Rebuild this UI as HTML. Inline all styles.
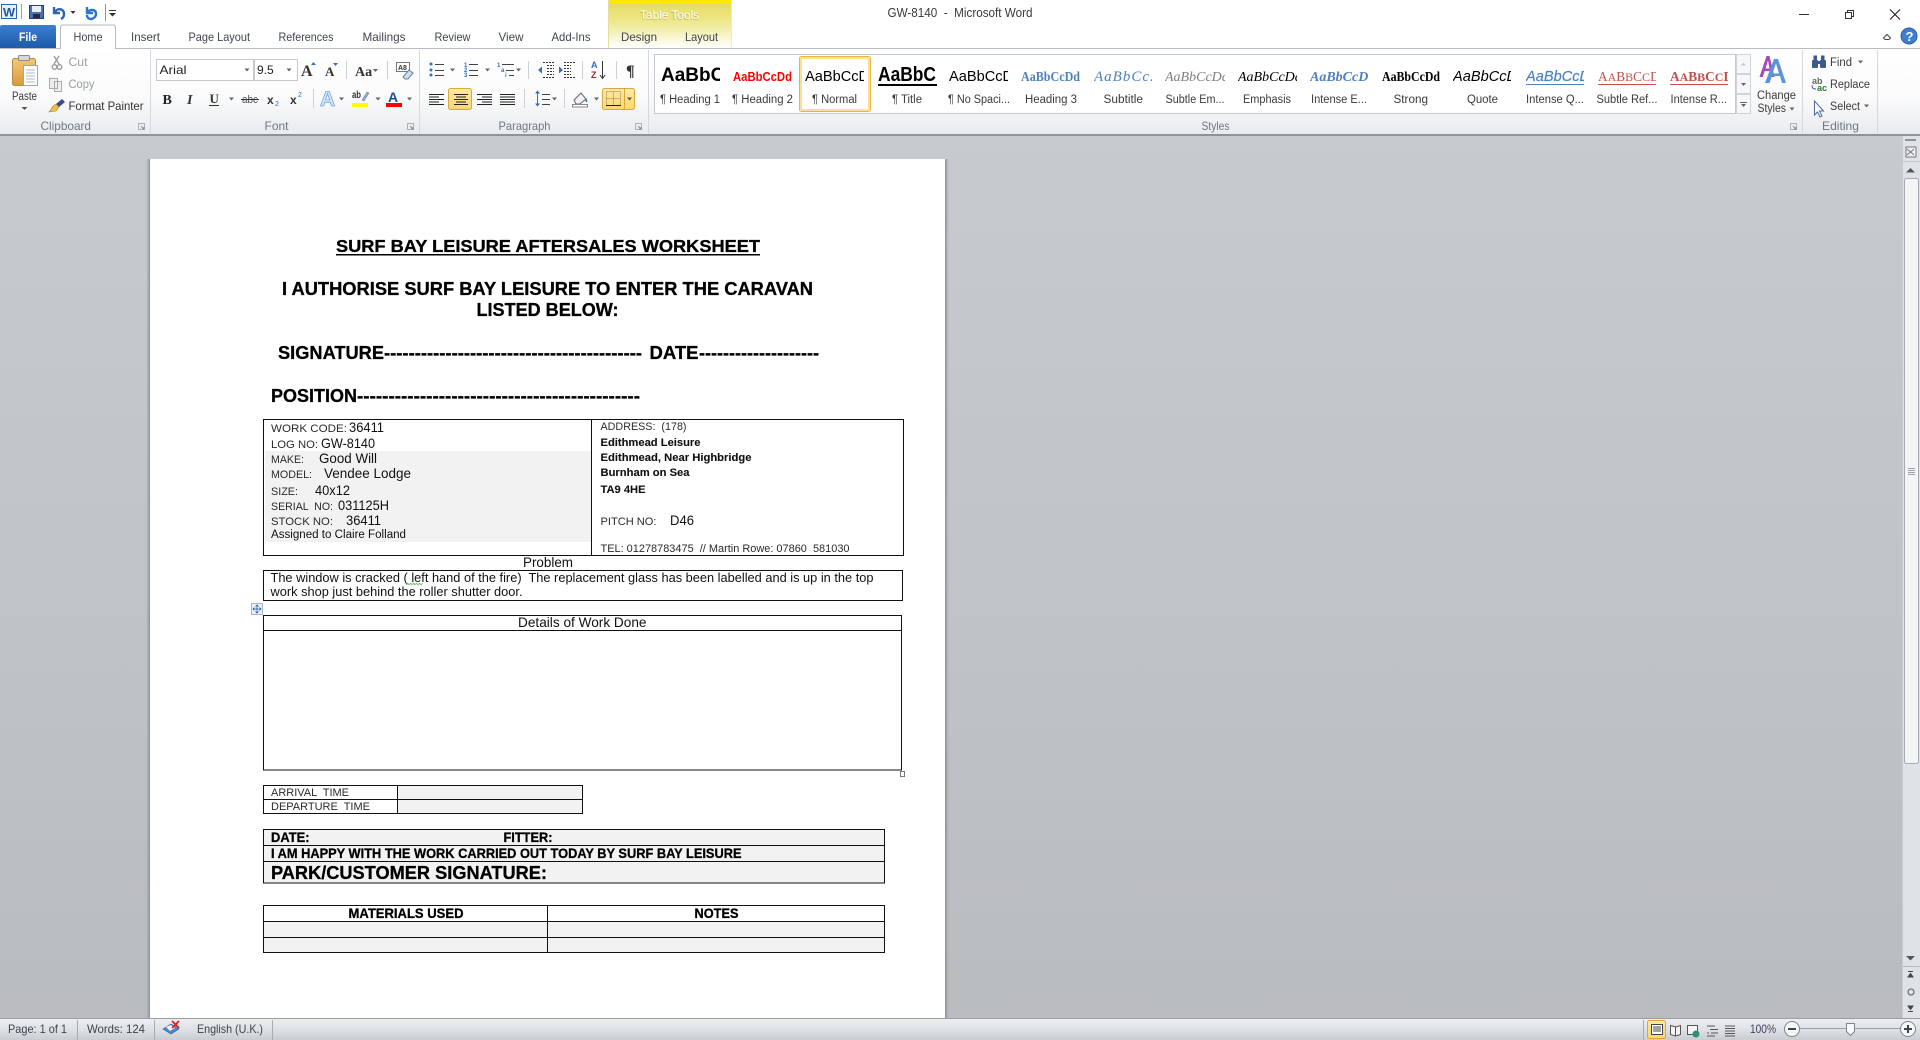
<!DOCTYPE html>
<html lang="en"><head><meta charset="utf-8"><title>GW-8140 - Microsoft Word</title>
<style>
html,body{margin:0;padding:0;background:#c9cdd2;overflow:hidden}
svg{display:block}
text{font-family:"Liberation Sans",Arial,sans-serif;white-space:pre}
.t{font-size:12px;fill:#3f4650}
.g{font-size:12px;fill:#6f7882}
.s{font-size:11.5px;fill:#3b3b3b}
.d{font-size:12px;fill:#9a9ea3}
.l{font-size:11px;fill:#2a2a2a}
.v{font-size:14px;fill:#111}
.b{font-size:11px;font-weight:bold;fill:#111;stroke:#111;stroke-width:.1px}
.h{font-weight:bold;fill:#000;stroke:#000;stroke-width:.3px}
.ln{stroke:#111;stroke-width:1;fill:none}
.ic{stroke:#444;stroke-width:1;fill:none}
.sep{stroke:#d4d7db;stroke-width:1}
</style></head><body>
<svg xmlns="http://www.w3.org/2000/svg" width="1920" height="1040" viewBox="0 0 1920 1040">
<defs>
<linearGradient id="rib" x1="0" y1="0" x2="0" y2="1"><stop offset="0" stop-color="#ffffff"/><stop offset=".55" stop-color="#fbfbfc"/><stop offset="1" stop-color="#e9ebee"/></linearGradient>
<linearGradient id="can" x1="0" y1="0" x2="0" y2="1"><stop offset="0" stop-color="#c9cdd2"/><stop offset="1" stop-color="#b9bcbf"/></linearGradient>
<linearGradient id="st" x1="0" y1="0" x2="0" y2="1"><stop offset="0" stop-color="#eef0f2"/><stop offset=".5" stop-color="#dfe2e6"/><stop offset="1" stop-color="#c9ccd1"/></linearGradient>
<linearGradient id="tt" x1="0" y1="0" x2="0" y2="1"><stop offset="0" stop-color="#e2d95a"/><stop offset=".45" stop-color="#eee88c"/><stop offset="1" stop-color="#ffffff"/></linearGradient>
<linearGradient id="file" x1="0" y1="0" x2="0" y2="1"><stop offset="0" stop-color="#3a7fd0"/><stop offset="1" stop-color="#1e5aa8"/></linearGradient>
<linearGradient id="hl" x1="0" y1="0" x2="0" y2="1"><stop offset="0" stop-color="#ffe9a3"/><stop offset="1" stop-color="#fdd671"/></linearGradient>
<linearGradient id="shl" x1="0" y1="0" x2="1" y2="0"><stop offset="0" stop-color="#9c9fa3" stop-opacity="0"/><stop offset="1" stop-color="#8d9094"/></linearGradient>
<linearGradient id="shr" x1="0" y1="0" x2="1" y2="0"><stop offset="0" stop-color="#8d9094"/><stop offset="1" stop-color="#9c9fa3" stop-opacity="0"/></linearGradient>
<linearGradient id="clip" x1="0" y1="0" x2="0" y2="1"><stop offset="0" stop-color="#f4c778"/><stop offset="1" stop-color="#d99a3e"/></linearGradient>
</defs>

<!-- canvas -->
<rect width="1920" height="1040" fill="url(#can)"/>

<!-- title bar / tabs -->
<rect width="1920" height="48" fill="#fff"/>
<rect x="608" y="0" width="123" height="48" fill="url(#tt)"/>
<rect x="608" y="0" width="123" height="4" fill="#fde900"/>
<line x1="608.5" y1="0" x2="608.5" y2="48" stroke="#e3df9a"/>
<line x1="731.5" y1="0" x2="731.5" y2="48" stroke="#eeecd0"/>
<text x="640" y="20" font-size="12" font-weight="bold" fill="#b5ab4a" opacity=".6" textLength="59" lengthAdjust="spacingAndGlyphs">Table Tools</text>
<text x="640" y="19" font-size="12" fill="#fff" textLength="59" lengthAdjust="spacingAndGlyphs">Table Tools</text>
<text x="887.5" y="17" font-size="12.5" fill="#3a3a3a" textLength="145" lengthAdjust="spacingAndGlyphs">GW-8140  -  Microsoft Word</text>

<!-- QAT -->
<rect x="1.5" y="4.5" width="15" height="14" fill="#e8f0fa" stroke="#2a66b4"/>
<text x="3" y="16.5" font-size="12" font-weight="bold" fill="#1c55a6" textLength="12" lengthAdjust="spacingAndGlyphs">W</text>
<line x1="21.5" y1="4" x2="21.5" y2="19" stroke="#9aa0a8"/>
<rect x="29.5" y="5.5" width="14" height="13" fill="#4f6fae" stroke="#2c3f73"/>
<rect x="32" y="6" width="9" height="6" fill="#e8eefa"/><rect x="33" y="14" width="7" height="4" fill="#222a44"/>
<path d="M54 7v6h6M55 12c2-4 9-4 9 2 0 2-1 4-3 5" fill="none" stroke="#2a66b4" stroke-width="2.4"/>
<path d="M70.5 11h5l-2.5 3z" fill="#333"/>
<path d="M87 7v6h6M88 12c2-3 8-3 8 2 0 3-3 5-5 5-3 0-4-2-4-4" fill="none" stroke="#2f76c8" stroke-width="2.4"/>
<line x1="105.5" y1="4" x2="105.5" y2="21" stroke="#8d939b"/>
<path d="M109 10h7v1h-7zM109 13h7l-3.500 3.500z" fill="#333"/>

<!-- window controls -->
<line x1="1799" y1="14.500" x2="1809" y2="14.500" stroke="#333"/>
<path d="M1845.500 12.500h6v6h-6zM1847.500 12.500v-2h6v6h-2" fill="none" stroke="#333"/>
<path d="M1890 9.500l10 10M1900 9.500l-10 10" stroke="#222" stroke-width="1.100"/>
<path d="M1883.500 38l3.500-3.500 3.500 3.500-1.500 1.500h-4z" fill="none" stroke="#444"/>
<circle cx="1909" cy="36" r="8" fill="#3f7fd0"/><circle cx="1909" cy="36" r="8" fill="none" stroke="#2a5ea8"/>
<text x="1905.500" y="41" font-size="13" font-weight="bold" fill="#fff">?</text>

<!-- ribbon -->
<rect x="0" y="48" width="1920" height="86" fill="url(#rib)"/>
<line x1="0" y1="48.500" x2="1920" y2="48.500" stroke="#b7bcc3"/>
<rect x="0" y="134" width="1920" height="2" fill="#8f9398"/>
<path d="M60.500 49V27q0-2 2-2h51q2 0 2 2v22" fill="#fff" stroke="#b7bcc3"/>
<rect x="61" y="48" width="54" height="2" fill="#fff"/>

<!-- tabs -->
<path d="M0 48V27q0-2 2-2h52q2 0 2 2v21z" fill="url(#file)"/>
<text x="19" y="41" font-size="12" font-weight="bold" fill="#fff" textLength="18" lengthAdjust="spacingAndGlyphs">File</text>
<text x="73.500" y="41" class="t" textLength="29" lengthAdjust="spacingAndGlyphs">Home</text>
<text x="131" y="41" class="t" textLength="29" lengthAdjust="spacingAndGlyphs">Insert</text>
<text x="188.500" y="41" class="t" textLength="61.500" lengthAdjust="spacingAndGlyphs">Page Layout</text>
<text x="278.500" y="41" class="t" textLength="55" lengthAdjust="spacingAndGlyphs">References</text>
<text x="362.500" y="41" class="t" textLength="43" lengthAdjust="spacingAndGlyphs">Mailings</text>
<text x="434.500" y="41" class="t" textLength="36" lengthAdjust="spacingAndGlyphs">Review</text>
<text x="498.500" y="41" class="t" textLength="25" lengthAdjust="spacingAndGlyphs">View</text>
<text x="551.500" y="41" class="t" textLength="39" lengthAdjust="spacingAndGlyphs">Add-Ins</text>
<text x="621" y="41" class="t" textLength="36" lengthAdjust="spacingAndGlyphs">Design</text>
<text x="685" y="41" class="t" textLength="33" lengthAdjust="spacingAndGlyphs">Layout</text>

<line x1="150.500" y1="50" x2="150.500" y2="133" stroke="#d5d8dc"/>
<line x1="419.500" y1="50" x2="419.500" y2="133" stroke="#d5d8dc"/>
<line x1="648.500" y1="50" x2="648.500" y2="133" stroke="#d5d8dc"/>
<line x1="1802.500" y1="50" x2="1802.500" y2="133" stroke="#d5d8dc"/>
<line x1="1877.500" y1="50" x2="1877.500" y2="133" stroke="#d5d8dc"/>

<text x="40.500" y="130" class="g" textLength="50.500" lengthAdjust="spacingAndGlyphs">Clipboard</text>
<text x="264.500" y="130" class="g" textLength="24" lengthAdjust="spacingAndGlyphs">Font</text>
<text x="498.500" y="130" class="g" textLength="52" lengthAdjust="spacingAndGlyphs">Paragraph</text>
<text x="1201.500" y="130" class="g" textLength="28" lengthAdjust="spacingAndGlyphs">Styles</text>
<text x="1822" y="130" class="g" textLength="37" lengthAdjust="spacingAndGlyphs">Editing</text>
<g fill="none" stroke="#8b9097"><path d="M138.500 123.500h6v6h-6z" stroke="#aeb2b7"/><path d="M141 126l3 3M144 127v2h-2"/>
<path d="M407.500 123.500h6v6h-6z" stroke="#aeb2b7"/><path d="M410 126l3 3M413 127v2h-2"/>
<path d="M635.500 123.500h6v6h-6z" stroke="#aeb2b7"/><path d="M638 126l3 3M641 127v2h-2"/>
<path d="M1790.500 123.500h6v6h-6z" stroke="#aeb2b7"/><path d="M1793 126l3 3M1796 127v2h-2"/></g>

<!-- clipboard -->
<rect x="12.500" y="58.500" width="23" height="27" rx="2" fill="url(#clip)" stroke="#b98a46"/>
<rect x="18.500" y="55.500" width="11" height="5" rx="1" fill="#d8d8d8" stroke="#8a8a8a"/>
<rect x="23.500" y="65.500" width="14" height="20" fill="#fff" stroke="#9aa7b8"/>
<path d="M26 70h9M26 73h9M26 76h9M26 79h9M26 82h9" stroke="#a8b8cc"/>
<text x="12" y="100" class="s" textLength="25" lengthAdjust="spacingAndGlyphs">Paste</text>
<path d="M21.500 107h6l-3 3z" fill="#555"/>
<g stroke="#999" fill="none" stroke-width="1.300"><path d="M54 56l5 8M59 56l-5 8"/><circle cx="54.500" cy="67" r="2.300"/><circle cx="59.500" cy="67" r="2.300"/></g>
<text x="68.500" y="66" class="d" textLength="19" lengthAdjust="spacingAndGlyphs">Cut</text>
<path d="M49.500 78.500h8v10h-8zM54.500 81.500h7v10h-7z" fill="#eee" stroke="#aaa"/>
<text x="68.500" y="88" class="d" textLength="26" lengthAdjust="spacingAndGlyphs">Copy</text>
<path d="M62 99l3 3-6 5-3-3z" fill="#3b4c80"/><path d="M56 104l3 3-3 4-7 1c2-2 3-6 7-8z" fill="#e9c04e" stroke="#a87a20" stroke-width=".6"/>
<text x="68.500" y="110" font-size="12" fill="#333" textLength="75" lengthAdjust="spacingAndGlyphs">Format Painter</text>

<!-- font group -->
<rect x="156.500" y="59.500" width="97" height="21" fill="#fff" stroke="#c6cacf"/>
<rect x="254.500" y="59.500" width="43" height="21" fill="#fff" stroke="#c6cacf"/>
<text x="159.500" y="74" font-size="12" fill="#222" textLength="27" lengthAdjust="spacingAndGlyphs">Arial</text>
<text x="257" y="74" font-size="12" fill="#222">9.5</text>
<path d="M244.500 68.500h5l-2.500 3zM286.500 68.500h5l-2.500 3z" fill="#666"/>
<text x="301" y="76" font-family="Liberation Serif" font-size="16" font-weight="bold" fill="#333" style="font-family:'Liberation Serif',serif">A</text>
<path d="M311 65h5l-2.500-3z" fill="#2f6fc2"/>
<text x="325" y="76" font-size="13" font-weight="bold" fill="#333" style="font-family:'Liberation Serif',serif">A</text>
<path d="M333 63h5l-2.500 3z" fill="#2f6fc2"/>
<line x1="346.500" y1="61" x2="346.500" y2="79" stroke="#cdd0d5"/>
<text x="355" y="76" font-size="14" font-weight="bold" fill="#333" style="font-family:'Liberation Serif',serif">Aa</text>
<path d="M373 69h5l-2.500 3z" fill="#666"/>
<line x1="387.500" y1="61" x2="387.500" y2="79" stroke="#cdd0d5"/>
<rect x="396.500" y="62.500" width="13" height="9" fill="#fff" stroke="#777"/>
<text x="398" y="70" font-size="7" font-weight="bold" fill="#333">A8</text>
<path d="M403 77l6-7 4 3-5 6-3 0z" fill="#cfe0f2" stroke="#6a7f99"/>

<text x="162.500" y="104" font-size="14" font-weight="bold" fill="#222" style="font-family:'Liberation Serif',serif">B</text>
<text x="187" y="104" font-size="14" font-style="italic" font-weight="bold" fill="#333" style="font-family:'Liberation Serif',serif">I</text>
<text x="209.500" y="103" font-size="13" font-weight="bold" fill="#333" style="font-family:'Liberation Serif',serif">U</text>
<line x1="209" y1="105.500" x2="219" y2="105.500" stroke="#333"/>
<path d="M229 97.500h5l-2.500 3z" fill="#666"/>
<text x="242" y="103" font-size="11" fill="#555" textLength="16" lengthAdjust="spacingAndGlyphs">abc</text>
<line x1="241" y1="99.500" x2="259" y2="99.500" stroke="#333"/>
<text x="267" y="104" font-size="12" font-weight="bold" fill="#333">x</text><text x="275" y="106" font-size="7" fill="#2f6fc2">2</text>
<text x="290" y="104" font-size="12" font-weight="bold" fill="#333">x</text><text x="298" y="97" font-size="7" fill="#2f6fc2">2</text>
<line x1="313.500" y1="89" x2="313.500" y2="108" stroke="#cdd0d5"/>
<text x="320" y="106" font-size="21" font-weight="bold" fill="#d4e6f7" stroke="#6fa7dc" stroke-width=".8">A</text>
<path d="M339 97.500h5l-2.500 3z" fill="#666"/>
<text x="352" y="98" font-size="10" font-weight="bold" fill="#333" textLength="9" lengthAdjust="spacingAndGlyphs">ab</text>
<path d="M362 100l5-8 2 1-5 8z" fill="#8ab1dc" stroke="#666" stroke-width=".5"/>
<rect x="352" y="103" width="16" height="4" fill="#ffff00"/>
<path d="M375.500 97.500h5l-2.500 3z" fill="#666"/>
<text x="388" y="102" font-size="14" font-weight="bold" fill="#2a4a8a">A</text>
<rect x="386" y="103" width="16" height="4" fill="#ff0000"/>
<path d="M407 97.500h5l-2.500 3z" fill="#666"/>

<!-- paragraph group row 1 -->
<g fill="#2f6fc2"><circle cx="431" cy="64" r="1.500"/><circle cx="431" cy="70" r="1.500"/><circle cx="431" cy="75" r="1.500"/></g>
<path d="M435 64.500h9M435 70.500h9M435 75.500h9" stroke="#444"/>
<path d="M450 68.500h5l-2.500 3zM485 68.500h5l-2.500 3zM516 68.500h5l-2.500 3z" fill="#666"/>
<text x="464" y="67" font-size="6" font-weight="bold" fill="#2f6fc2">1</text><text x="464" y="72" font-size="6" font-weight="bold" fill="#2f6fc2">2</text><text x="464" y="77" font-size="6" font-weight="bold" fill="#2f6fc2">3</text>
<path d="M469 64.500h9M469 70.500h9M469 75.500h9" stroke="#444"/>
<text x="497" y="67" font-size="6" font-weight="bold" fill="#2f6fc2">1</text><text x="501" y="72" font-size="6" font-weight="bold" fill="#2f6fc2">a</text><text x="505" y="77" font-size="6" font-weight="bold" fill="#2f6fc2">i</text>
<path d="M502 64.500h12M506 70.500h8M509 75.500h5" stroke="#444"/>
<line x1="528.500" y1="61" x2="528.500" y2="79" stroke="#cdd0d5"/>
<path d="M543 62.500h11M547 65.500h7M547 68.500h7M547 71.500h7M547 74.500h7M543 77.500h11" stroke="#333" stroke-dasharray="2 1"/>
<path d="M538 70l4-3.500v7z" fill="#2f6fc2"/>
<path d="M564 62.500h11M564 65.500h7M564 68.500h7M564 71.500h7M564 74.500h7M564 77.500h11" stroke="#333" stroke-dasharray="2 1" transform="translate(0 0)"/>
<path d="M563 70l-4-3.500v7z" fill="#2f6fc2"/>
<line x1="582.500" y1="61" x2="582.500" y2="79" stroke="#cdd0d5"/>
<text x="591" y="68" font-size="9" font-weight="bold" fill="#2f6fc2">A</text>
<text x="591" y="78" font-size="9" font-weight="bold" fill="#a02a2a">Z</text>
<path d="M602.500 61v17M600 75l2.500 3.500 2.500-3.500" stroke="#333" fill="none"/>
<line x1="616.500" y1="61" x2="616.500" y2="79" stroke="#cdd0d5"/>
<text x="626" y="76" font-size="16" font-weight="bold" fill="#333" style="font-family:'Liberation Serif',serif">¶</text>

<!-- paragraph row 2 -->
<rect x="448.500" y="88.500" width="23" height="21" rx="2" fill="url(#hl)" stroke="#d8a93c"/>
<rect x="602.500" y="88.500" width="32" height="21" rx="2" fill="url(#hl)" stroke="#d8a93c"/>
<line x1="624.500" y1="89" x2="624.500" y2="109" stroke="#d8a93c"/>
<path d="M429 94.500h15M429 97h10M429 99.500h15M429 102h10M429 104.500h15" stroke="#222"/>
<path d="M454 94.500h14M456 97h10M454 99.500h14M456 102h10M454 104.500h14" stroke="#222"/>
<path d="M477 94.500h15M482 97h10M477 99.500h15M482 102h10M477 104.500h15" stroke="#222"/>
<path d="M500 94.500h15M500 97h15M500 99.500h15M500 102h15M500 104.500h15" stroke="#222"/>
<line x1="524.500" y1="89" x2="524.500" y2="108" stroke="#cdd0d5"/>
<path d="M535 93.500l2.500-3 2.500 3zM535 103.500l2.500 3 2.500-3z" fill="#2f6fc2"/><path d="M537.500 93v11" stroke="#2f6fc2"/>
<path d="M542 94.500h8M542 99.500h8M542 104.500h8" stroke="#444"/>
<path d="M552 97.500h5l-2.500 3z" fill="#666"/>
<line x1="564.500" y1="89" x2="564.500" y2="108" stroke="#cdd0d5"/>
<path d="M574 100l7-7 5 6-6 5h-4z" fill="#eef2f6" stroke="#666"/><path d="M586 98c1 2 2 3 1 4s-2-1-1-4z" fill="#2f6fc2"/>
<rect x="572.500" y="104.500" width="15" height="2.500" fill="#fff" stroke="#888"/>
<path d="M594 97.500h5l-2.500 3z" fill="#666"/>
<g fill="none" stroke="#8a8065" stroke-dasharray="1 1"><rect x="606.500" y="91.500" width="14" height="14"/><path d="M606.500 98.500h14M613.500 91.500v14"/></g>
<line x1="606" y1="105.500" x2="621" y2="105.500" stroke="#222"/>
<path d="M627 97.500h5l-2.500 3z" fill="#555"/>

<!-- styles gallery -->
<rect x="654.500" y="54.500" width="1081" height="59" fill="#fff" stroke="#c6cacf"/>
<rect x="1736.500" y="54.500" width="14" height="19" fill="#f6f7f8" stroke="#d0d3d7"/>
<rect x="1736.500" y="74.500" width="14" height="19" fill="#f6f7f8" stroke="#d0d3d7"/>
<rect x="1736.500" y="94.500" width="14" height="19" fill="#f6f7f8" stroke="#d0d3d7"/>
<path d="M1741 65.500h5l-2.500-3z" fill="#c3c6ca"/><path d="M1741 83h5l-2.500 3z" fill="#666"/>
<path d="M1740 102.500h7" stroke="#666"/><path d="M1741 104h5l-2.500 3z" fill="#666"/>

<rect x="799.500" y="56.500" width="71" height="55" rx="2" fill="#fff" stroke="#e6b54a" />
<rect x="801" y="58" width="68" height="52" fill="none" stroke="#fde08d" stroke-width="2"/>

<svg x="661" y="60" width="59" height="30"><text x="0" y="21" font-size="19" font-weight="bold" fill="#000">AaBbC</text></svg>
<svg x="733" y="60" width="60" height="30"><text x="0" y="21" font-size="13.300" font-weight="bold" fill="#ff0000" textLength="59" lengthAdjust="spacingAndGlyphs">AaBbCcDd</text></svg>
<svg x="805" y="60" width="59" height="30"><text x="0" y="21" font-size="14.600" fill="#000">AaBbCcDd</text></svg>
<svg x="878" y="60" width="59" height="30"><text x="0" y="21" font-size="20" font-weight="bold" fill="#000" textLength="58" lengthAdjust="spacingAndGlyphs">AaBbC</text><rect x="0" y="24" width="59" height="2" fill="#000"/></svg>
<svg x="949" y="60" width="59" height="30"><text x="0" y="21" font-size="14.600" fill="#000">AaBbCcDd</text></svg>
<svg x="1021" y="60" width="60" height="30"><text x="0" y="21" font-size="13.300" font-weight="bold" fill="#4f81bd" style="font-family:'Liberation Serif',serif" textLength="59" lengthAdjust="spacingAndGlyphs">AaBbCcDd</text></svg>
<svg x="1094" y="60" width="58" height="30"><text x="0" y="21" font-size="15" font-style="italic" fill="#4f81bd" style="font-family:'Liberation Serif',serif;letter-spacing:1px">AaBbCc.</text></svg>
<svg x="1165" y="60" width="60" height="30"><text x="0" y="21" font-size="14" font-style="italic" fill="#808080" style="font-family:'Liberation Serif',serif">AaBbCcDd</text></svg>
<svg x="1238" y="60" width="59" height="30"><text x="0" y="21" font-size="14" font-style="italic" fill="#000" style="font-family:'Liberation Serif',serif">AaBbCcDd</text></svg>
<svg x="1310" y="60" width="58" height="30"><text x="0" y="21" font-size="14" font-style="italic" font-weight="bold" fill="#4f81bd" style="font-family:'Liberation Serif',serif">AaBbCcDd</text></svg>
<svg x="1382" y="60" width="59" height="30"><text x="0" y="21" font-size="13.300" font-weight="bold" fill="#000" style="font-family:'Liberation Serif',serif" textLength="58" lengthAdjust="spacingAndGlyphs">AaBbCcDd</text></svg>
<svg x="1453" y="60" width="58" height="30"><text x="0" y="21" font-size="14.600" font-style="italic" fill="#000">AaBbCcD</text></svg>
<svg x="1526" y="60" width="58" height="30"><text x="0" y="21" font-size="14.600" font-style="italic" fill="#4f81bd" stroke="#4f81bd" stroke-width=".2">AaBbCcD</text><rect x="0" y="24" width="58" height="1" fill="#4f81bd"/></svg>
<svg x="1598" y="60" width="58" height="30"><text x="0" y="21" font-size="13.300" fill="#c0504d" style="font-family:'Liberation Serif',serif">A<tspan font-size="12">A</tspan>B<tspan font-size="12">B</tspan>C<tspan font-size="12">C</tspan>D<tspan font-size="12">D</tspan>D</text><rect x="0" y="24" width="58" height="1" fill="#c0504d"/></svg>
<svg x="1670" y="60" width="58" height="30"><text x="0" y="21" font-size="13.300" font-weight="bold" fill="#c0504d" style="font-family:'Liberation Serif',serif">A<tspan font-size="12">A</tspan>B<tspan font-size="12">B</tspan>C<tspan font-size="12">C</tspan>D</text><rect x="0" y="24" width="58" height="1" fill="#c0504d"/></svg>

<text x="660" y="103" class="s" textLength="60" lengthAdjust="spacingAndGlyphs">¶ Heading 1</text>
<text x="732" y="103" class="s" textLength="61" lengthAdjust="spacingAndGlyphs">¶ Heading 2</text>
<text x="812" y="103" class="s" textLength="45" lengthAdjust="spacingAndGlyphs">¶ Normal</text>
<text x="892" y="103" class="s" textLength="30" lengthAdjust="spacingAndGlyphs">¶ Title</text>
<text x="948" y="103" class="s" textLength="62" lengthAdjust="spacingAndGlyphs">¶ No Spaci...</text>
<text x="1025" y="103" class="s" textLength="52" lengthAdjust="spacingAndGlyphs">Heading 3</text>
<text x="1103.500" y="103" class="s" textLength="39.500" lengthAdjust="spacingAndGlyphs">Subtitle</text>
<text x="1165.500" y="103" class="s" textLength="59" lengthAdjust="spacingAndGlyphs">Subtle Em...</text>
<text x="1243" y="103" class="s" textLength="48" lengthAdjust="spacingAndGlyphs">Emphasis</text>
<text x="1311" y="103" class="s" textLength="56" lengthAdjust="spacingAndGlyphs">Intense E...</text>
<text x="1393.500" y="103" class="s" textLength="34.500" lengthAdjust="spacingAndGlyphs">Strong</text>
<text x="1467" y="103" class="s" textLength="31" lengthAdjust="spacingAndGlyphs">Quote</text>
<text x="1526" y="103" class="s" textLength="58" lengthAdjust="spacingAndGlyphs">Intense Q...</text>
<text x="1596.500" y="103" class="s" textLength="61" lengthAdjust="spacingAndGlyphs">Subtle Ref...</text>
<text x="1670.500" y="103" class="s" textLength="56.500" lengthAdjust="spacingAndGlyphs">Intense R...</text>

<!-- change styles -->
<path d="M1759.500 77l7-21h3l5 21h-3l-1.200-6h-5.600l-2 6zM1765.500 68.500h4l-1.500-8z" fill="#a64bb5" fill-rule="evenodd"/>
<path d="M1765 83l9-24h4l8 24h-4l-2-7h-8l-2.500 7zM1772.500 73.500h6.500l-3-10z" fill="#5b95d8" fill-rule="evenodd"/>
<text x="1757" y="99" class="s" textLength="39" lengthAdjust="spacingAndGlyphs">Change</text>
<text x="1757.500" y="112" class="s" textLength="28.500" lengthAdjust="spacingAndGlyphs">Styles</text>
<path d="M1789.500 107.500h5l-2.500 3z" fill="#666"/>

<!-- editing -->
<g fill="#3c5a8c"><rect x="1812" y="60" width="6" height="8" rx="1"/><rect x="1820" y="60" width="6" height="8" rx="1"/><rect x="1813.500" y="55.500" width="3.500" height="5"/><rect x="1821" y="55.500" width="3.500" height="5"/><rect x="1817" y="61" width="4" height="3"/></g>
<text x="1830" y="66" class="s" textLength="22" lengthAdjust="spacingAndGlyphs">Find</text>
<path d="M1858 60.500h5l-2.500 3z" fill="#666"/>
<text x="1812" y="84" font-size="9" font-weight="bold" fill="#666">ab</text><text x="1817" y="91" font-size="9" font-weight="bold" fill="#2c7a2c">ac</text>
<path d="M1812 85c0 3 1 4 4 4" stroke="#2f6fc2" fill="none"/>
<text x="1830" y="88" class="s" textLength="40" lengthAdjust="spacingAndGlyphs">Replace</text>
<path d="M1814.500 101v14l3-3 2.500 5 2-1-2.500-5h4z" fill="#fff" stroke="#4a6a9a"/>
<text x="1830" y="110" class="s" textLength="30" lengthAdjust="spacingAndGlyphs">Select</text>
<path d="M1864 104.500h5l-2.500 3z" fill="#666"/>

<!-- scrollbar -->
<rect x="1903" y="136" width="17" height="882" fill="#dfe3e8"/>
<line x1="1902.500" y1="136" x2="1902.500" y2="1018" stroke="#c8ccd1"/>
<rect x="1905" y="139" width="11" height="2" fill="#8f9398"/>
<rect x="1906" y="147" width="10" height="10" fill="#f0f2f4" stroke="#777"/><path d="M1907 149l7 6M1914 149l-7 6" stroke="#777"/>
<line x1="1903" y1="161.500" x2="1920" y2="161.500" stroke="#c4c8cd"/>
<path d="M1906 172.500h9l-4.500-4.500z" fill="#555"/>
<rect x="1904.500" y="178.500" width="14" height="585" rx="2" fill="#f2f4f6" stroke="#a6abb1"/>
<path d="M1908 468.500h7M1908 470.500h7M1908 472.500h7M1908 474.500h7" stroke="#9ea3a9"/>
<path d="M1906 956h9l-4.500 4.500z" fill="#555"/>
<line x1="1903" y1="966.500" x2="1920" y2="966.500" stroke="#b6babf"/>
<path d="M1908 971.500h5M1908 977l2.500-3.500 2.500 3.500z" stroke="#444" fill="#444"/>
<circle cx="1911" cy="992" r="3" fill="none" stroke="#555"/>
<path d="M1908 1011.500h5M1908 1006l2.500 3.500 2.500-3.500z" stroke="#444" fill="#444"/>

<!-- page -->
<rect x="146" y="159" width="4" height="859" fill="url(#shl)"/>
<rect x="945" y="159" width="4" height="859" fill="url(#shr)"/>
<rect x="150" y="159" width="795" height="859" fill="#fff"/>

<!-- heading text -->
<text x="336" y="252" class="h" font-size="17.300" textLength="424" lengthAdjust="spacingAndGlyphs">SURF BAY LEISURE AFTERSALES WORKSHEET</text>
<rect x="336" y="254" width="424" height="1.500" fill="#000"/>
<text x="282" y="295" class="h" font-size="18" textLength="531" lengthAdjust="spacingAndGlyphs">I AUTHORISE SURF BAY LEISURE TO ENTER THE CARAVAN</text>
<text x="476.500" y="316" class="h" font-size="18" textLength="142" lengthAdjust="spacingAndGlyphs">LISTED BELOW:</text>
<text x="278" y="359" class="h" font-size="18.600" textLength="106" lengthAdjust="spacingAndGlyphs">SIGNATURE</text>
<text x="384" y="359" class="h" font-size="18.600" textLength="258" lengthAdjust="spacingAndGlyphs">------------------------------------------</text>
<text x="649.500" y="359" class="h" font-size="18.600" textLength="49" lengthAdjust="spacingAndGlyphs">DATE</text>
<text x="699" y="359" class="h" font-size="18.600" textLength="120" lengthAdjust="spacingAndGlyphs">--------------------</text>
<text x="271" y="402" class="h" font-size="18.600" textLength="86" lengthAdjust="spacingAndGlyphs">POSITION</text>
<text x="357" y="402" class="h" font-size="18.600" textLength="283" lengthAdjust="spacingAndGlyphs">---------------------------------------------</text>

<!-- table 1 -->
<rect x="265" y="451" width="326" height="91" fill="#f2f2f2"/>
<rect x="263.500" y="419.500" width="640" height="136" class="ln"/>
<line x1="591.500" y1="419.500" x2="591.500" y2="555.500" class="ln"/>
<text x="271" y="432" class="l" textLength="76" lengthAdjust="spacingAndGlyphs">WORK CODE:</text><text x="349" y="432" class="v" textLength="35" lengthAdjust="spacingAndGlyphs">36411</text>
<text x="271" y="448" class="l" textLength="47" lengthAdjust="spacingAndGlyphs">LOG NO:</text><text x="321" y="448" class="v" textLength="54" lengthAdjust="spacingAndGlyphs">GW-8140</text>
<text x="271" y="463" class="l" textLength="33" lengthAdjust="spacingAndGlyphs">MAKE:</text><text x="319" y="463" class="v" textLength="58" lengthAdjust="spacingAndGlyphs">Good Will</text>
<text x="271" y="478" class="l" textLength="41" lengthAdjust="spacingAndGlyphs">MODEL:</text><text x="324" y="478" class="v" textLength="87" lengthAdjust="spacingAndGlyphs">Vendee Lodge</text>
<text x="271" y="495" class="l" textLength="27" lengthAdjust="spacingAndGlyphs">SIZE:</text><text x="315" y="495" class="v" textLength="35" lengthAdjust="spacingAndGlyphs">40x12</text>
<text x="271" y="510" class="l" textLength="62" lengthAdjust="spacingAndGlyphs">SERIAL  NO:</text><text x="338" y="510" class="v" textLength="51" lengthAdjust="spacingAndGlyphs">031125H</text>
<text x="271" y="525" class="l" textLength="62" lengthAdjust="spacingAndGlyphs">STOCK NO:</text><text x="346" y="525" class="v" textLength="35" lengthAdjust="spacingAndGlyphs">36411</text>
<text x="271" y="538" font-size="11.500" fill="#111" textLength="135" lengthAdjust="spacingAndGlyphs">Assigned to Claire Folland</text>
<text x="600.500" y="430" class="l" textLength="86" lengthAdjust="spacingAndGlyphs">ADDRESS:  (178)</text>
<text x="600.500" y="446" class="b" textLength="100" lengthAdjust="spacingAndGlyphs">Edithmead Leisure</text>
<text x="600.500" y="461" class="b" textLength="151" lengthAdjust="spacingAndGlyphs">Edithmead, Near Highbridge</text>
<text x="600.500" y="476" class="b" textLength="89" lengthAdjust="spacingAndGlyphs">Burnham on Sea</text>
<text x="600.500" y="493" class="b" textLength="45" lengthAdjust="spacingAndGlyphs">TA9 4HE</text>
<text x="600.500" y="525" class="l" textLength="56" lengthAdjust="spacingAndGlyphs">PITCH NO:</text><text x="670" y="525" class="v" textLength="24" lengthAdjust="spacingAndGlyphs">D46</text>
<text x="600.500" y="552" class="l" textLength="249" lengthAdjust="spacingAndGlyphs">TEL: 01278783475  // Martin Rowe: 07860  581030</text>

<!-- problem -->
<text x="523" y="567" font-size="14" fill="#111" textLength="50" lengthAdjust="spacingAndGlyphs">Problem</text>
<rect x="263.500" y="570.500" width="639" height="30" class="ln"/>
<text x="270.500" y="582" font-size="13.300" fill="#111" textLength="603" lengthAdjust="spacingAndGlyphs">The window is cracked ( left hand of the fire)  The replacement glass has been labelled and is up in the top</text>
<text x="270.500" y="596" font-size="13.300" fill="#111" textLength="252" lengthAdjust="spacingAndGlyphs">work shop just behind the roller shutter door.</text>
<path d="M406 584.500l1.500-1 1.500 1 1.500-1 1.500 1 1.500-1 1.500 1 1.500-1 1.500 1 1.500-1 1.500 1 1.500-1" fill="none" stroke="#5aa55a" stroke-width=".8"/>

<!-- move handle -->
<rect x="251.500" y="603.500" width="11" height="11" fill="#eaf1fb" stroke="#a8b4c4"/>
<path d="M257 605v8M253 609h8M255.500 606.500l1.500-1.500 1.500 1.500M255.500 611.500l1.500 1.500 1.500-1.500M254.500 607.500l-1.500 1.500 1.500 1.500M259.500 607.500l1.500 1.500-1.500 1.500" stroke="#2a5ea8" fill="none" stroke-width=".8"/>

<!-- details -->
<rect x="263.500" y="615.500" width="638" height="154.500" class="ln"/>
<line x1="263.500" y1="630.500" x2="901.500" y2="630.500" class="ln"/>
<text x="518" y="627" font-size="14" fill="#111" textLength="128.500" lengthAdjust="spacingAndGlyphs">Details of Work Done</text>
<rect x="900.500" y="771.500" width="4" height="5" fill="#fff" stroke="#777"/>

<!-- arrival -->
<rect x="397.500" y="785.500" width="185" height="28" fill="#f2f2f2"/>
<rect x="263.500" y="785.500" width="319" height="28" class="ln"/>
<path d="M263.500 799.500h319M397.500 785.500v28" class="ln"/>
<text x="271" y="796" class="l" textLength="78" lengthAdjust="spacingAndGlyphs">ARRIVAL  TIME</text>
<text x="271" y="810" class="l" textLength="99" lengthAdjust="spacingAndGlyphs">DEPARTURE  TIME</text>

<!-- sign table -->
<rect x="263.500" y="829.500" width="621" height="54" fill="#f2f2f2"/>
<rect x="263.500" y="829.500" width="621" height="53.500" class="ln"/>
<path d="M263.500 845.500h621M263.500 861.500h621" class="ln"/>
<text x="271" y="842" class="h" font-size="14" textLength="38.500" lengthAdjust="spacingAndGlyphs">DATE:</text>
<text x="503.500" y="842" class="h" font-size="14" textLength="49" lengthAdjust="spacingAndGlyphs">FITTER:</text>
<text x="271" y="858" class="h" font-size="14" textLength="470.500" lengthAdjust="spacingAndGlyphs">I AM HAPPY WITH THE WORK CARRIED OUT TODAY BY SURF BAY LEISURE</text>
<text x="271" y="879" class="h" font-size="18.600" textLength="276" lengthAdjust="spacingAndGlyphs">PARK/CUSTOMER SIGNATURE:</text>

<!-- materials -->
<rect x="263.500" y="921.500" width="621" height="31" fill="#f2f2f2"/>
<rect x="263.500" y="905.500" width="621" height="47" class="ln"/>
<path d="M263.500 921.500h621M263.500 937.500h621M547.500 905.500v47" class="ln"/>
<text x="348.500" y="918" class="h" font-size="14" textLength="115" lengthAdjust="spacingAndGlyphs">MATERIALS USED</text>
<text x="694.500" y="918" class="h" font-size="14" textLength="44" lengthAdjust="spacingAndGlyphs">NOTES</text>

<!-- status bar -->
<rect x="0" y="1018" width="1920" height="22" fill="url(#st)"/>
<line x1="0" y1="1018.500" x2="1920" y2="1018.500" stroke="#9a9ea4"/>
<text x="8" y="1033" font-size="12" fill="#3f444b" textLength="59" lengthAdjust="spacingAndGlyphs">Page: 1 of 1</text>
<line x1="77.500" y1="1020" x2="77.500" y2="1040" stroke="#a8acb1"/>
<text x="87" y="1033" font-size="12" fill="#3f444b" textLength="58" lengthAdjust="spacingAndGlyphs">Words: 124</text>
<line x1="154.500" y1="1020" x2="154.500" y2="1040" stroke="#a8acb1"/>
<path d="M163 1029l8-5 8 5-8 5z" fill="#4f86c8" stroke="#2d5f9e" stroke-width=".6"/><path d="M166 1027l5-2 4 3-5 3z" fill="#f2f4f8"/>
<path d="M172 1021l7 7M179 1021l-7 7" stroke="#e02020" stroke-width="1.800"/>
<text x="197" y="1033" font-size="12" fill="#3f444b" textLength="66" lengthAdjust="spacingAndGlyphs">English (U.K.)</text>
<line x1="272.500" y1="1020" x2="272.500" y2="1040" stroke="#a8acb1"/>
<line x1="1643.500" y1="1020" x2="1643.500" y2="1040" stroke="#a8acb1"/>
<rect x="1647.500" y="1020.500" width="18" height="18" rx="2" fill="url(#hl)" stroke="#d8a93c"/>
<rect x="1651.500" y="1024.500" width="11" height="10" fill="#fff" stroke="#444"/>
<path d="M1653 1027h8M1653 1029h8M1653 1031h8" stroke="#444"/>
<path d="M1670.500 1025.500l5 1.500 5-1.500v9l-5 1.500-5-1.500zM1675.500 1027v9" fill="#f5f5f5" stroke="#555"/>
<rect x="1687.500" y="1025.500" width="10" height="9" fill="#f4f4f4" stroke="#555"/>
<circle cx="1696" cy="1034" r="3.500" fill="#2f8f6f"/>
<path d="M1707 1026h8M1710 1029.500h8M1707 1033h2M1711 1033h7M1707 1036h8" stroke="#555"/>
<path d="M1725 1026h10M1725 1028.500h10M1725 1031h10M1725 1033.500h10M1725 1036h10" stroke="#555"/>
<text x="1750" y="1033" font-size="12" fill="#43405f" textLength="26" lengthAdjust="spacingAndGlyphs">100%</text>
<line x1="1800" y1="1028.500" x2="1900" y2="1028.500" stroke="#9aa0a8"/>
<circle cx="1792" cy="1029" r="7.500" fill="#f6f7f8" stroke="#7f8690"/><path d="M1788 1029h8" stroke="#444" stroke-width="2"/>
<circle cx="1908" cy="1029" r="7.500" fill="#f6f7f8" stroke="#7f8690"/><path d="M1904 1029h8M1908 1025v8" stroke="#444" stroke-width="2"/>
<path d="M1846.500 1023.500h8v8l-4 4-4-4z" fill="#fafafa" stroke="#7f8690"/>
</svg>
</body></html>
